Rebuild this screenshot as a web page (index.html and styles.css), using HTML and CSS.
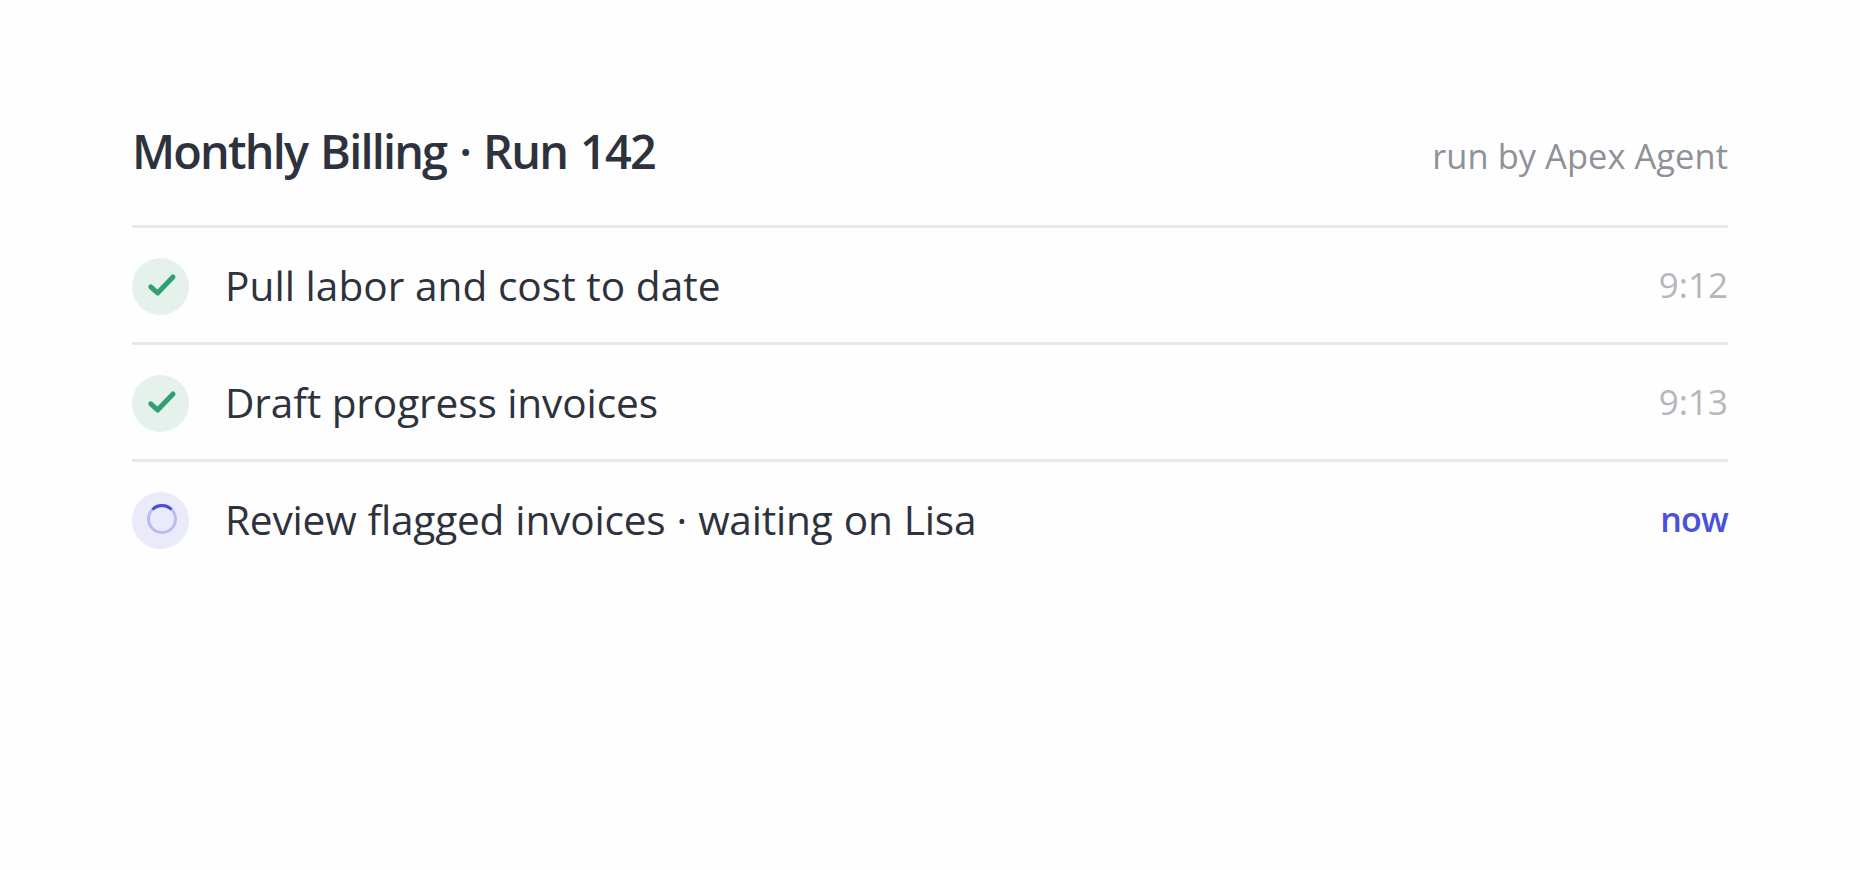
FILE: index.html
```html
<!DOCTYPE html>
<html lang="en">
<head>
  <meta charset="utf-8">
  <title>Monthly Billing · Run 142</title>
  <link rel="stylesheet" href="styles.css">
</head>
<body>
  <main class="run">
    <header class="run-header">
      <h1 class="run-title">Monthly Billing · Run 142</h1>
      <span class="run-by">run by Apex Agent</span>
    </header>

    <ul class="steps">
      <li class="step">
        <span class="badge done">
          <svg viewBox="0 0 57 57"><path d="M18.8 28.8L25.6 35L41 19"/></svg>
        </span>
        <span class="label pull">Pull labor and cost to date</span>
        <span class="time">9:12</span>
      </li>
      <li class="step">
        <span class="badge done">
          <svg viewBox="0 0 57 57"><path d="M18.8 28.8L25.6 35L41 19"/></svg>
        </span>
        <span class="label draft">Draft progress invoices</span>
        <span class="time">9:13</span>
      </li>
      <li class="step">
        <span class="badge active">
          <svg viewBox="0 0 57 57">
            <circle cx="30" cy="27" r="13.5"/>
            <path d="M20.5 17.5A13.5 13.5 0 0 1 39.5 17.5"/>
          </svg>
        </span>
        <span class="label review">Review flagged invoices · waiting on Lisa</span>
        <span class="time now">now</span>
      </li>
    </ul>
  </main>
</body>
</html>
```

FILE: styles.css
```css
body {
  margin: 0;
  background-color: #fefefe;
  color: #2d323c;
  font-family: "Open Sans", sans-serif;
}
.run {
  padding: 114px 132px 0;
}
.run-header {
  display: flex;
  justify-content: space-between;
  align-items: baseline;
  height: 111px;
  border-bottom: 3px solid #e8e8e8;
}
.run-title {
  margin: 0;
  font-size: 46.8px;
  font-weight: 600;
  line-height: 74px;
  letter-spacing: -1.8px;
  word-spacing: 2.6px;
}
.run-by {
  color: #8e9197;
  font-size: 34.4px;
  letter-spacing: 0.08px;
}
.steps {
  margin: 0;
  padding: 0;
  list-style: none;
}
.step {
  display: flex;
  align-items: center;
  height: 114px;
  border-bottom: 3px solid #e8e8e8;
}
.step:last-child {
  border-bottom: none;
}
.badge {
  width: 57px;
  height: 57px;
  margin: 3px 36px 0 0;
  border-radius: 50%;
}
.badge svg {
  display: block;
  fill: none;
  stroke-linecap: round;
  stroke-linejoin: round;
}
.done {
  background-color: #e5f2eb;
}
.done path {
  stroke: #2fa16f;
  stroke-width: 5;
}
.active {
  background-color: #e9eafa;
}
.active circle {
  stroke: #b9bcf0;
  stroke-width: 3;
}
.active path {
  stroke: #474fd8;
  stroke-width: 3;
  stroke-linecap: butt;
}
.label {
  flex: 1;
  padding-top: 2px;
  font-size: 40.6px;
  line-height: 56px;
  white-space: nowrap;
}
.pull {
  letter-spacing: 0.04px;
}
.draft {
  letter-spacing: -0.1px;
}
.review {
  letter-spacing: -0.2px;
  word-spacing: 0.8px;
}
.time {
  color: #b6b7bb;
  font-size: 35px;
  line-height: 48px;
}
.now {
  color: #4a50dc;
  font-size: 34px;
  font-weight: 600;
  letter-spacing: -0.8px;
}
```
